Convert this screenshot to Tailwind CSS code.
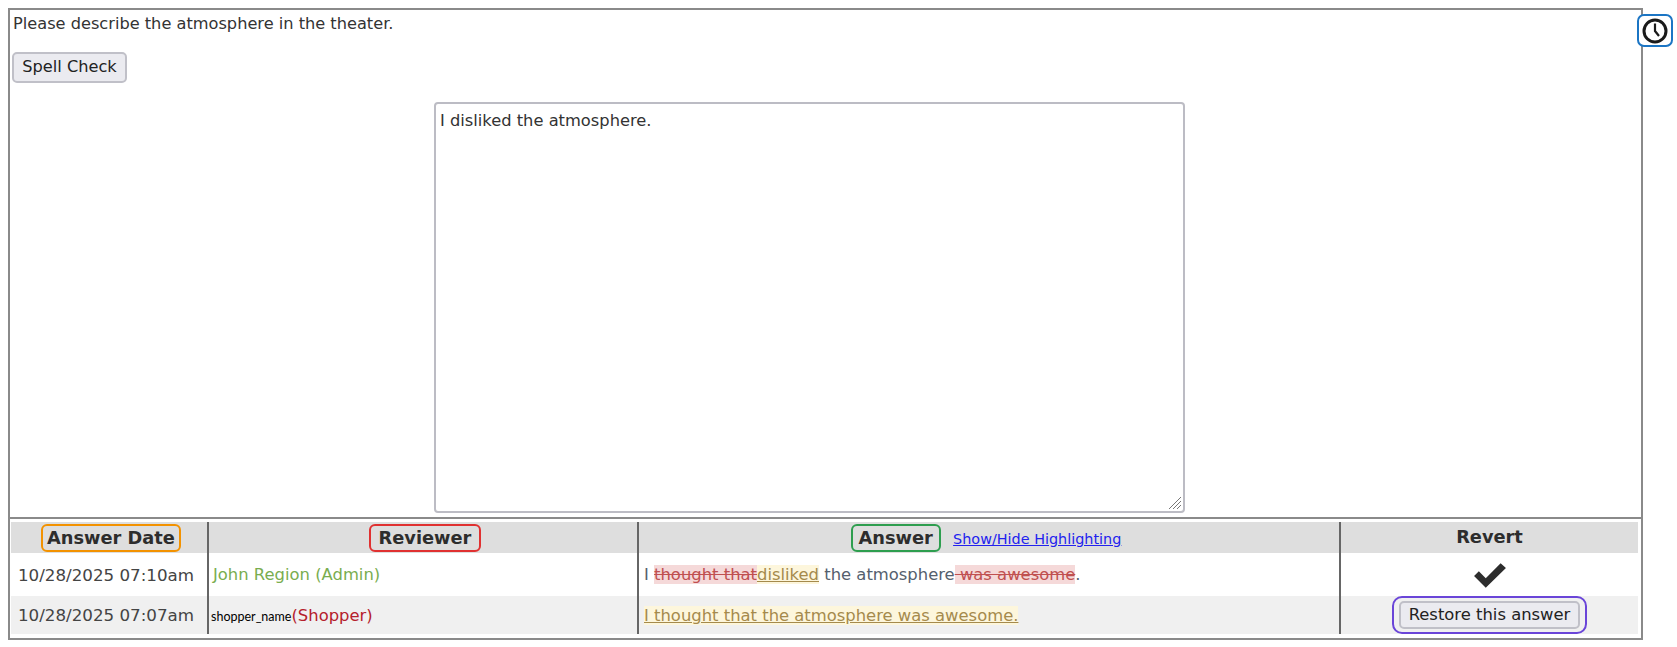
<!DOCTYPE html>
<html lang="en">
<head>
  <meta charset="UTF-8">
  <meta name="viewport" content="width=device-width, initial-scale=1.0">
  <title>Answer History</title>
  <script src="https://cdn.jsdelivr.net/npm/@tailwindcss/browser@4"></script>
</head>

<body class="bg-white h-[647px] overflow-hidden font-['DejaVu_Sans',sans-serif] text-[16.2px] text-[#333]">

  <div class="relative pt-[8px] pl-[8px]">

    <!-- Question box -->
    <div class="w-[1635px] h-[632px] border-2 border-[#8a8a8a] flex flex-col">
      <div class="h-[509px] flex flex-col border-b-2 border-[#8a8a8a] px-[3px]">
        <p class="h-[20px] mt-[4px] leading-[20px] whitespace-nowrap">Please describe the atmosphere in the theater.</p>

        <button class="mt-[18px] -ml-[1px] w-[115px] h-[31px] bg-[#ebebf0] border-2 border-[#c0c0c8] rounded-[5px] text-[16.2px] text-[#222]">Spell Check</button>

        <!-- Answer box -->
        <div class="mt-[19px] ml-[421px] w-[751px] h-[411px] border-2 border-[#bcbcc4] rounded-[4px] px-[4px] pt-[7px] relative leading-[20px] text-[16.3px]">
          I disliked the atmosphere.
          <svg class="absolute right-[1px] bottom-[1px]" width="14" height="14" viewBox="0 0 14 14" fill="none" stroke="#777" stroke-width="1">
            <path d="M13 1 1 13M13 5 5 13M13 9 9 13"/>
          </svg>
        </div>
      </div>

      <!-- History table -->
      <div class="pt-[3px] px-[1px]">
        <table class="table-fixed border-collapse w-[1627px] text-[16.4px]">
          <colgroup>
            <col class="w-[197px]">
            <col class="w-[430px]">
            <col class="w-[702px]">
            <col class="w-[298px]">
          </colgroup>
          <thead>
            <tr class="bg-[#dedede] h-[31px] text-[17.8px] text-[#2d2d2d] text-center">
              <th class="p-0 pl-[4px] font-bold border-r-2 border-[#666]">
                <span class="inline-block h-[28px] leading-[24px] px-[4px] border-2 border-[#f39200] rounded-[6px]">Answer Date</span>
              </th>
              <th class="p-0 pl-[4px] font-bold border-r-2 border-[#666]">
                <span class="inline-block h-[28px] leading-[24px] px-[8px] border-2 border-[#e03131] rounded-[6px]">Reviewer</span>
              </th>
              <th class="p-0 pr-[6px] font-bold border-r-2 border-[#666]">
                <span class="inline-block h-[28px] leading-[24px] px-[6px] border-2 border-[#2e9e4f] rounded-[6px]">Answer</span>
                <a href="#" class="ml-[6px] text-[14.4px] font-normal text-[#2222ee] underline">Show/Hide Highlighting</a>
              </th>
              <th class="p-0 font-bold">Revert</th>
            </tr>
          </thead>
          <tbody>
            <tr class="h-[43px] bg-white">
              <td class="pl-[7px] pr-0 pt-[2px] pb-0 text-[16.7px] whitespace-nowrap border-r-2 border-[#666] text-[#444]">10/28/2025 07:10am</td>
              <td class="pl-[4px] pr-0 pt-[2px] pb-0 whitespace-nowrap border-r-2 border-[#666] text-[#79ad4f]">John Region (Admin)</td>
              <td class="pl-[5px] pr-0 pt-[2px] pb-0 whitespace-nowrap border-r-2 border-[#666] text-[#55606e]">
                I <del class="bg-[#f5d9d9] text-[#c05050]">thought that</del><ins class="bg-[#fdf6dc] text-[#a58a4c] underline">disliked</ins> the atmosphere<del class="bg-[#f5d9d9] text-[#c05050]"> was awesome</del>.
              </td>
              <td class="p-0 text-center">
                <svg class="inline-block" width="34" height="28" viewBox="0 0 32 26" fill="#2d2d2d">
                  <path d="M1 14 5.500 9.500 12 16 26 2 31 6.500 12 25Z"/>
                </svg>
              </td>
            </tr>
            <tr class="h-[38px] bg-[#f0f0f0]">
              <td class="pl-[7px] pr-0 pt-[2px] pb-0 text-[16.7px] whitespace-nowrap border-r-2 border-[#666] text-[#444]">10/28/2025 07:07am</td>
              <td class="pl-[2px] pr-0 pt-[2px] pb-0 whitespace-nowrap border-r-2 border-[#666] text-[#b5202c]"><span class="font-['Lato',sans-serif] text-[12.5px] text-black">shopper_name</span>(Shopper)</td>
              <td class="pl-[5px] pr-0 pt-[2px] pb-0 whitespace-nowrap border-r-2 border-[#666]">
                <ins class="bg-[#fdf6dc] text-[#a58a4c] underline">I thought that the atmosphere was awesome.</ins>
              </td>
              <td class="p-0 text-center">
                <span class="inline-block border-2 border-[#6a45d8] rounded-[10px] px-[5px] py-[3px] align-middle">
                  <button class="block w-[181px] h-[28px] bg-[#ebebf0] border-2 border-[#c0c0c8] rounded-[5px] text-[16.4px] leading-[20px] text-[#222] whitespace-nowrap">Restore this answer</button>
                </span>
              </td>
            </tr>
          </tbody>
        </table>
      </div>
    </div>

    <!-- History toggle, sits over the box corner -->
    <button class="absolute left-[1637px] top-[14px] w-[36px] h-[33px] border-2 border-[#1b75c4] rounded-[7px] bg-white flex items-center justify-center">
      <svg width="26" height="26" viewBox="0 0 26 26" fill="none" stroke="#1a1a1a" stroke-width="3">
        <circle cx="13" cy="13" r="11"/>
        <path d="M13 5.500V13l4 5" stroke-width="2.200"/>
      </svg>
    </button>
  </div>

</body>
</html>
